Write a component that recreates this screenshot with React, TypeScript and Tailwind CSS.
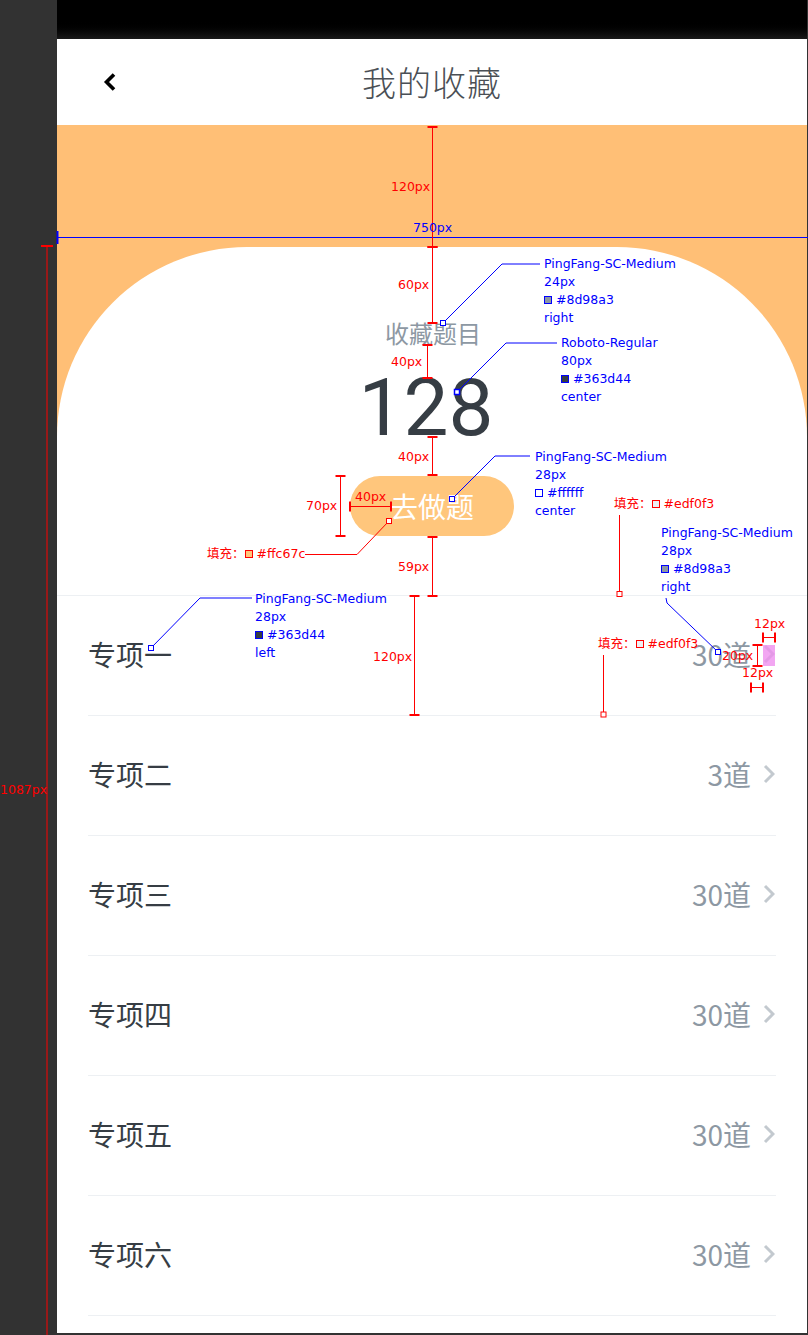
import React from 'react';

const topics = [
  { name: '专项一', count: 30 },
  { name: '专项二', count: 3 },
  { name: '专项三', count: 30 },
  { name: '专项四', count: 30 },
  { name: '专项五', count: 30 },
  { name: '专项六', count: 30 },
];

function ChevronRight() {
  return (
    <svg width="12" height="20" viewBox="0 0 12 20" fill="none">
      <polyline points="2,2 10,10 2,18" stroke="#c3c9cf" strokeWidth="3" strokeLinejoin="miter" />
    </svg>
  );
}

function Swatch({ className }: { className: string }) {
  return <span className={`inline-block w-[8px] h-[8px] border align-[0px] mr-[4px] ${className}`} />;
}

// Redline measure lines + leaders, drawn over the mockup
function Redlines() {
  const red = '#ff0000';
  const blue = '#0000ff';
  const vTicks = (x: number, y1: number, y2: number, w = 10) => (
    <g>
      <line x1={x} y1={y1} x2={x} y2={y2} stroke={red} strokeWidth="1" />
      <line x1={x - w / 2} y1={y1} x2={x + w / 2} y2={y1} stroke={red} strokeWidth="2" />
      <line x1={x - w / 2} y1={y2} x2={x + w / 2} y2={y2} stroke={red} strokeWidth="2" />
    </g>
  );
  const hTicks = (y: number, x1: number, x2: number, h = 10) => (
    <g>
      <line x1={x1} y1={y} x2={x2} y2={y} stroke={red} strokeWidth="1" />
      <line x1={x1} y1={y - h / 2} x2={x1} y2={y + h / 2} stroke={red} strokeWidth="2" />
      <line x1={x2} y1={y - h / 2} x2={x2} y2={y + h / 2} stroke={red} strokeWidth="2" />
    </g>
  );
  return (
    <svg className="absolute inset-0 pointer-events-none" width="808" height="1335" viewBox="0 0 808 1335">
      {/* height of full page */}
      <line x1="47" y1="246" x2="47" y2="1335" stroke={red} strokeWidth="1" />
      <line x1="41" y1="246" x2="53" y2="246" stroke={red} strokeWidth="2" />

      {/* width */}
      <line x1="57" y1="237.5" x2="808" y2="237.5" stroke={blue} strokeWidth="1" />
      <line x1="57.5" y1="231" x2="57.5" y2="244" stroke={blue} strokeWidth="2" />

      {vTicks(432.5, 127, 247)}
      {vTicks(432.5, 247, 323)}
      {vTicks(427.5, 345, 378)}
      {vTicks(432.5, 437, 475)}
      {vTicks(432.5, 537, 596)}
      {vTicks(340.5, 476, 536)}
      {hTicks(506.5, 350, 391)}
      {vTicks(414.5, 596, 715)}

      {/* chevron box */}
      <rect x="763" y="645" width="12" height="21" fill="#ee88ee" opacity="0.75" />
      {vTicks(757.5, 645, 666)}
      {hTicks(637.5, 763, 775)}
      {hTicks(687.5, 751, 763)}

      {/* blue leaders */}
      <polyline points="443,323 502,264 540,264" fill="none" stroke={blue} strokeWidth="1" />
      <rect x="440.5" y="320.5" width="5" height="5" fill="white" stroke={blue} />
      <polyline points="457,392 506,343 557,343" fill="none" stroke={blue} strokeWidth="1" />
      <rect x="454.5" y="389.5" width="5" height="5" fill="white" stroke={blue} strokeWidth="1.5" />
      <polyline points="452,499 495,456 530,456" fill="none" stroke={blue} strokeWidth="1" />
      <rect x="449.5" y="496.5" width="5" height="5" fill="white" stroke={blue} />
      <polyline points="666,598 667,603 718,652" fill="none" stroke={blue} strokeWidth="1" />
      <rect x="715.5" y="649.5" width="5" height="5" fill="white" stroke={blue} />
      <polyline points="151,648 200,598 252,598" fill="none" stroke={blue} strokeWidth="1" />
      <rect x="148.5" y="645.5" width="5" height="5" fill="white" stroke={blue} />

      {/* red fill leaders */}
      <polyline points="389,521 357,554.5 305,554.5" fill="none" stroke={red} strokeWidth="1" />
      <rect x="386.5" y="518.5" width="5" height="5" fill="white" stroke={red} />
      <line x1="619.5" y1="515" x2="619.5" y2="594" stroke={red} strokeWidth="1" />
      <rect x="617" y="591.5" width="5" height="5" fill="white" stroke={red} />
      <line x1="603.5" y1="655" x2="603.5" y2="714" stroke={red} strokeWidth="1" />
      <rect x="601" y="712" width="5" height="5" fill="white" stroke={red} />
    </svg>
  );
}

function Labels() {
  const redText = "absolute text-[12.5px] leading-[18px] text-[#ff0000] whitespace-nowrap";
  const blueText = "absolute text-[12.5px] leading-[18px] text-[#0000ff] whitespace-nowrap";
  return (
    <div className="absolute inset-0 pointer-events-none font-['DejaVu_Sans','Noto_Sans_CJK_SC',sans-serif]">
      <div className={`${redText} left-[0px] top-[781px]`}>1087px</div>
      <div className={`${redText} left-[391px] top-[178px]`}>120px</div>
      <div className={`${blueText} left-[413px] top-[219px]`}>750px</div>
      <div className={`${redText} left-[398px] top-[276px]`}>60px</div>
      <div className={`${redText} left-[391px] top-[353px]`}>40px</div>
      <div className={`${redText} left-[398px] top-[448px]`}>40px</div>
      <div className={`${redText} left-[306px] top-[497px]`}>70px</div>
      <div className={`${redText} left-[355px] top-[488px]`}>40px</div>
      <div className={`${redText} left-[398px] top-[558px]`}>59px</div>
      <div className={`${redText} left-[373px] top-[648px]`}>120px</div>
      <div className={`${redText} left-[722px] top-[647px]`}>20px</div>
      <div className={`${redText} left-[754px] top-[615px]`}>12px</div>
      <div className={`${redText} left-[742px] top-[664px]`}>12px</div>

      <div className={`${redText} left-[207px] top-[545px]`}>
        填充：<Swatch className="border-[#ff0000] bg-[#ffc67c]" />#ffc67c
      </div>
      <div className={`${redText} left-[614px] top-[495px]`}>
        填充：<Swatch className="border-[#ff0000] bg-[#edf0f3]" />#edf0f3
      </div>
      <div className={`${redText} left-[598px] top-[635px]`}>
        填充：<Swatch className="border-[#ff0000] bg-[#edf0f3]" />#edf0f3
      </div>

      <div className={`${blueText} left-[544px] top-[255px]`}>
        <div>PingFang-SC-Medium</div>
        <div>24px</div>
        <div><Swatch className="border-[#0000ff] bg-[#8d98a3]" />#8d98a3</div>
        <div>right</div>
      </div>
      <div className={`${blueText} left-[561px] top-[334px]`}>
        <div>Roboto-Regular</div>
        <div>80px</div>
        <div><Swatch className="border-[#0000ff] bg-[#363d44]" />#363d44</div>
        <div>center</div>
      </div>
      <div className={`${blueText} left-[535px] top-[448px]`}>
        <div>PingFang-SC-Medium</div>
        <div>28px</div>
        <div><Swatch className="border-[#0000ff] bg-white" />#ffffff</div>
        <div>center</div>
      </div>
      <div className={`${blueText} left-[661px] top-[524px]`}>
        <div>PingFang-SC-Medium</div>
        <div>28px</div>
        <div><Swatch className="border-[#0000ff] bg-[#8d98a3]" />#8d98a3</div>
        <div>right</div>
      </div>
      <div className={`${blueText} left-[255px] top-[590px]`}>
        <div>PingFang-SC-Medium</div>
        <div>28px</div>
        <div><Swatch className="border-[#0000ff] bg-[#363d44]" />#363d44</div>
        <div>left</div>
      </div>
    </div>
  );
}

export default function App() {
  return (
    <div className="relative w-[808px] h-[1335px] overflow-hidden bg-[#323232] flex font-['Noto_Sans_CJK_SC',sans-serif]">
      <div className="w-[57px] shrink-0" />

      {/* Phone mockup */}
      <div className="w-[750px] h-[1333px] shrink-0 bg-white flex flex-col">
        {/* Status bar */}
        <div className="h-[39px] bg-gradient-to-b from-black via-black to-[#1a1a1a]" />

        {/* Nav */}
        <div className="h-[86px] grid grid-cols-[1fr_auto_1fr] items-center">
          <div className="pl-[46px] flex items-center">
            <svg width="14" height="20" viewBox="0 0 14 20" fill="none">
              <polyline points="11,2.5 3.5,10 11,17.5" stroke="#000" strokeWidth="3.6" />
            </svg>
          </div>
          <div className="text-[34px] leading-none text-[#4a4f55] font-light tracking-[1px]">我的收藏</div>
          <div />
        </div>

        {/* Header card */}
        <div className="bg-[#ffbf76] pt-[122px]">
          <div className="bg-white rounded-t-[190px] flex flex-col items-center pt-[74px] pb-[59px]">
            <div className="text-[24px] leading-[24px] text-[#8d98a3] pl-[2px]">收藏题目</div>
            <div className="mt-[23px] pr-[12px] text-[80px] leading-[80px] text-[#363d44] font-['Roboto',sans-serif]">128</div>
            <button className="mt-[28px] w-[164px] h-[60px] rounded-full bg-[#ffc67c] text-white text-[28px] leading-none">
              去做题
            </button>
          </div>
        </div>

        {/* Topic list */}
        <div className="border-t border-[#edf0f3]">
          {topics.map((t) => (
            <div key={t.name} className="mx-[31px] h-[120px] pb-[4px] border-b border-[#edf0f3] flex items-center justify-between">
              <span className="text-[28px] leading-none text-[#363d44]">{t.name}</span>
              <span className="flex items-center gap-[12px] pr-[1px]">
                <span className="text-[28px] leading-none text-[#8d98a3]">{t.count}道</span>
                <ChevronRight />
              </span>
            </div>
          ))}
        </div>
      </div>

      <Redlines />
      <Labels />
    </div>
  );
}
